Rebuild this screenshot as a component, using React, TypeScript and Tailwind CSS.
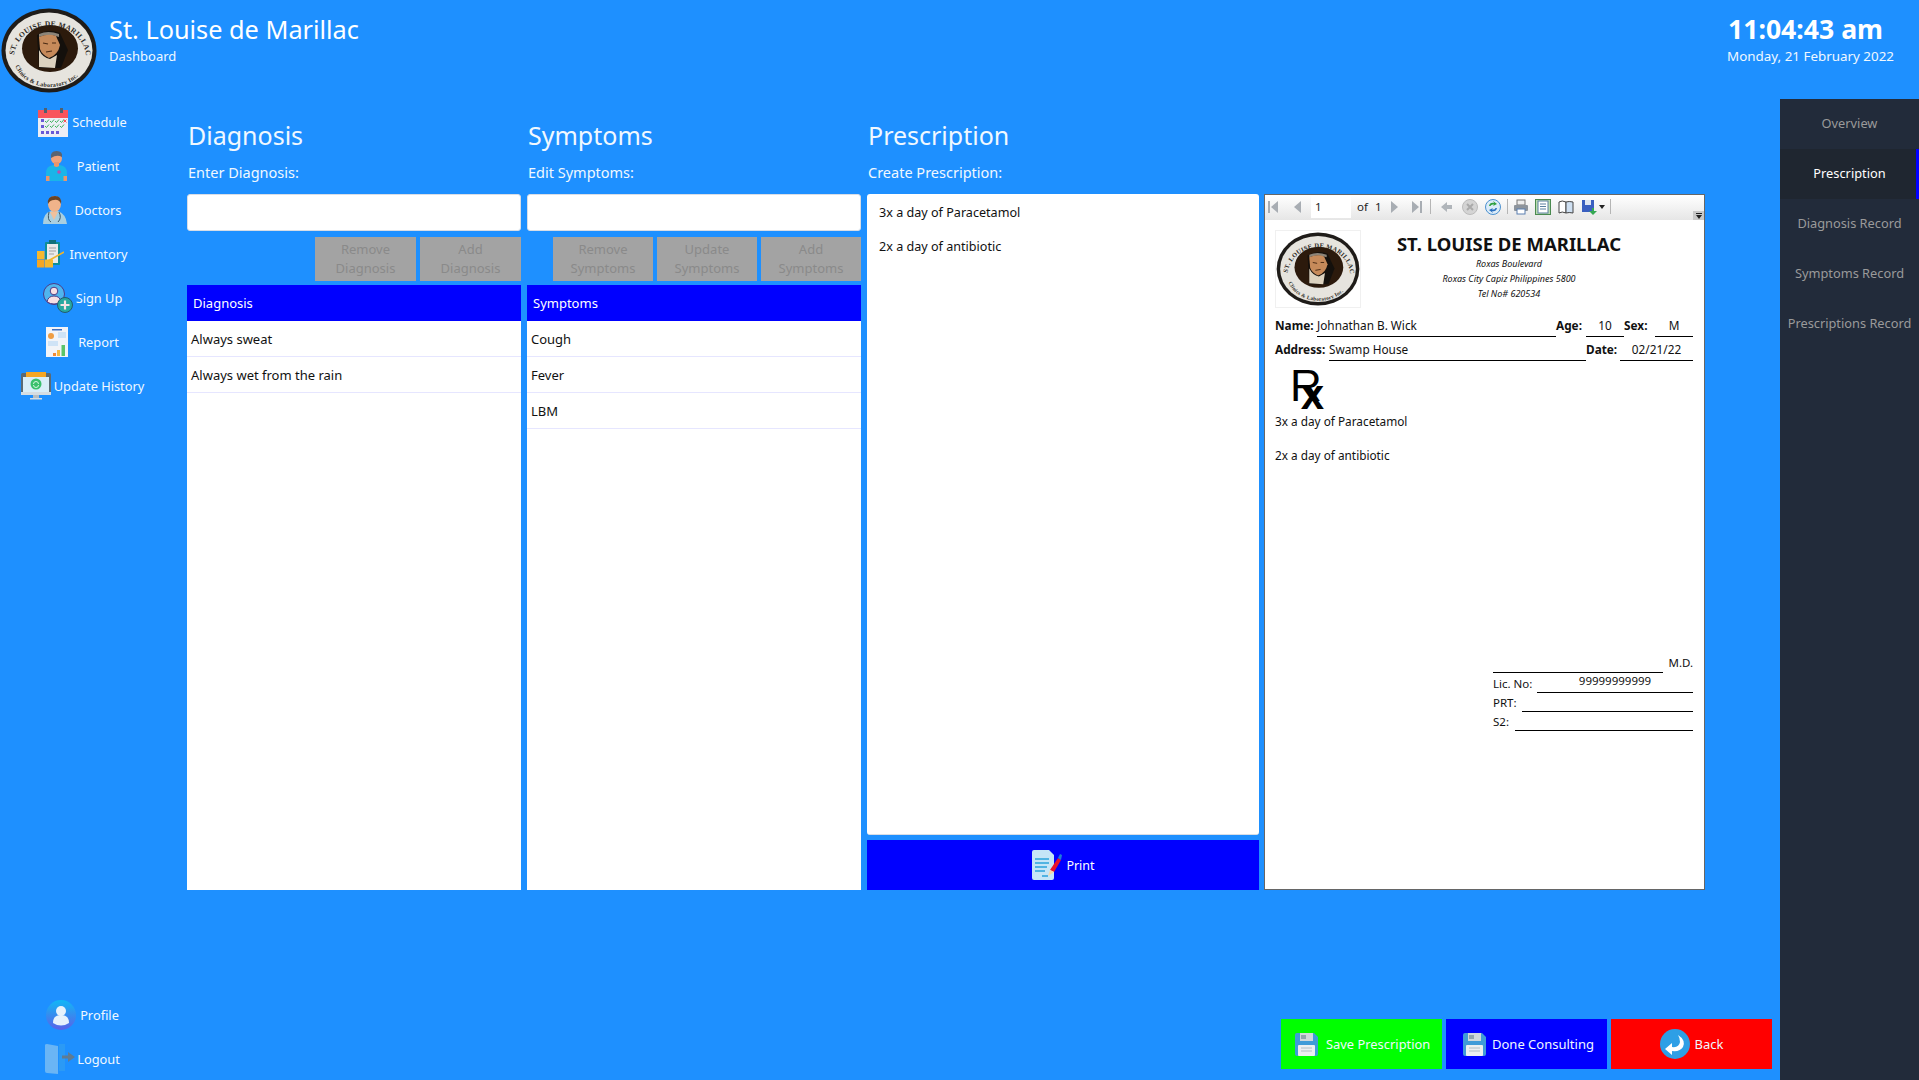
import React from "react";

const Logo = ({ id, className }: { id: string; className: string }) => (
  <svg viewBox="0 0 96 85" className={className}>
    <ellipse cx="48" cy="42.5" rx="47.5" ry="42" fill="#1f1c19" />
    <ellipse cx="48" cy="42.5" rx="43.5" ry="38" fill="#e6e4de" />
    <ellipse cx="49" cy="40.5" rx="28" ry="23.5" fill="#2c1a0c" />
    <defs>
      <path id={`${id}-t`} d="M13 50 A36 32 0 1 1 85 50" />
      <path id={`${id}-b`} d="M13 50 A36 29 0 0 0 85 50" />
    </defs>
    <text fontFamily="'Liberation Serif',serif" fontSize="7.4" fontWeight="700" fill="#2a2723" letterSpacing="0.3">
      <textPath href={`#${id}-t`} startOffset="3">ST. LOUISE DE MARILLAC</textPath>
    </text>
    <text fontFamily="'Liberation Serif',serif" fontSize="6" fontWeight="700" fill="#2a2723" letterSpacing="0.3">
      <textPath href={`#${id}-b`} startOffset="8">Clinics &amp; Laboratory Inc.</textPath>
    </text>
    <path d="M36 27 Q47 20 59 25 L67 42 L60 60 L38 60Z" fill="#14100c" />
    <path d="M38 26 Q47 22 58 26 L58 29 Q47 25 38 29Z" fill="#8c8478" />
    <path d="M38 29 Q47 25 55 28 L59 37 Q57 47 48 50 Q41 47 39 41Z" fill="#c68a5a" />
    <path d="M42 35 l5 1 M51 35 l4 0 M45 44 l6 -1" stroke="#4a2a14" strokeWidth="1.1" />
    <path d="M38 42 Q42 50 49 51 L56 47 L54 60 L38 59Z" fill="#dcd2bf" />
  </svg>
);

const Cal = () => (
  <svg viewBox="0 0 30 29" className="w-[30px] h-[29px]">
    <rect y="2" width="30" height="27" fill="#edeef5" />
    <rect y="2" width="30" height="8" fill="#f9545c" />
    <rect x="6" width="3" height="5" fill="#50606e" />
    <rect x="22" width="3" height="5" fill="#50606e" />
    {[13, 18].map((y) => [7, 12, 17, 22].map((x) => (
      <path key={`${x}${y}`} d={`M${x} ${y}l1.5 1.5l2.5-3`} stroke="#3eb35c" strokeWidth="1" fill="none" />
    )))}
    {[3, 8, 13, 18].map((x) => <rect key={x} x={x} y="23" width="3" height="3" fill="#6a5ad6" />)}
    <rect x="3" y="11" width="3" height="3" fill="#6a5ad6" />
    <rect x="3" y="17" width="3" height="3" fill="#6a5ad6" />
    <path d="M25.5 11.5l3 3M28.5 11.5l-3 3" stroke="#f9545c" />
  </svg>
);
const Patient = () => (
  <svg viewBox="0 0 21 30" className="w-[21px] h-[30px]">
    <path d="M0 30V22Q0 15 7 14L14 14Q21 15 21 22V30Z" fill="#19b5e8" />
    <rect x="0" y="25" width="3.5" height="5" fill="#e9966b" />
    <rect x="17.5" y="25" width="3.5" height="5" fill="#e9966b" />
    <circle cx="10.5" cy="7.5" r="5.5" fill="#f0a27a" />
    <path d="M8 11h5v4q-2.5 2-5 0Z" fill="#e9966b" />
    <path d="M5 7Q4 0 10.5 0Q17 0 16 6Q11 3 5 7Z" fill="#5a6472" />
    <circle cx="13" cy="21" r="1.8" fill="#b84fb0" />
  </svg>
);
const Doctor = () => (
  <svg viewBox="0 0 24 28" className="w-[24px] h-[28px]">
    <path d="M0 28Q0 17 8 15L15 15Q23 18 24 28Z" fill="#a9cfe0" />
    <path d="M7 16L11 24L15 16Z" fill="#f0c09c" />
    <ellipse cx="11.5" cy="8" rx="6.5" ry="8" fill="#f0b38a" />
    <path d="M5 8Q4 0 12 0Q19 0 18 8Q16 3 11 4Q7 4 5 8Z" fill="#6a4425" />
    <path d="M6 16Q4 24 8 26M16 16Q19 22 15 26" stroke="#3b5868" strokeWidth="1" fill="none" />
  </svg>
);
const Inventory = () => (
  <svg viewBox="0 0 27 28" className="w-[27px] h-[28px]">
    <rect x="8" y="2" width="15" height="23" rx="1" fill="#0f8f98" />
    <rect x="10" y="4" width="11" height="19" fill="#eaeaea" />
    <rect x="12" y="0" width="7" height="4" fill="#10707a" />
    <path d="M12 8h7M12 11h7M12 14h5" stroke="#a0a0a0" />
    <rect y="11" width="7.5" height="8" fill="#f5b82e" />
    <rect y="19.5" width="7.5" height="8" fill="#f5a623" />
    <rect x="8" y="19.5" width="8" height="8" fill="#f5b82e" />
    <path d="M11 21L27 12" stroke="#f0b429" strokeWidth="1.6" />
  </svg>
);
const SignUp = () => (
  <svg viewBox="0 0 30 30" className="w-[30px] h-[30px]">
    <circle cx="11" cy="11" r="10.5" fill="#4fb5ee" stroke="#4c3a86" />
    <circle cx="11" cy="8" r="3.8" fill="#f8dfe4" stroke="#4c3a86" />
    <path d="M4 19Q5 13 11 13Q17 13 18 19Q11 23 4 19Z" fill="#f8dfe4" stroke="#4c3a86" />
    <circle cx="22" cy="22" r="7.5" fill="#27a8a0" stroke="#245a6e" />
    <path d="M22 17.5v9M17.5 22h9" stroke="#f6e3e6" strokeWidth="2.2" />
  </svg>
);
const ReportIcon = () => (
  <svg viewBox="0 0 22 30" className="w-[22px] h-[30px]">
    <rect width="22" height="30" fill="#f2f4f8" />
    <rect x="6" y="2" width="10" height="1.5" fill="#3e6ec0" />
    <rect x="12" y="5" width="8" height="6" fill="#cfe3f6" />
    <circle cx="5" cy="9" r="3" fill="#ef9d43" />
    <rect x="2" y="14" width="10" height="5" fill="#cfe3f6" />
    <rect x="7" y="26" width="3" height="3" fill="#f08a35" />
    <rect x="11" y="23" width="3" height="6" fill="#f4b942" />
    <rect x="15.5" y="18" width="3.5" height="11" fill="#5cc46a" />
  </svg>
);
const UpdateIcon = () => (
  <svg viewBox="0 0 30 28" className="w-[30px] h-[28px]">
    <rect x="0" y="1" width="30" height="21" rx="1.5" fill="#5b6a73" />
    <rect x="5" y="0" width="20" height="5" fill="#f5a623" />
    <rect x="2" y="5" width="26" height="15" fill="#d9eef8" />
    <rect x="0" y="20" width="30" height="3" fill="#d5dde2" />
    <rect x="12" y="23" width="6" height="3" fill="#b5bec4" />
    <rect x="9" y="26" width="12" height="1.5" fill="#d5dde2" />
    <circle cx="15" cy="12" r="5.5" fill="#39c06c" />
    <path d="M12.5 12a2.5 2.5 0 0 1 5 0" stroke="#d5f6e0" fill="none" />
    <path d="M17.5 13a2.5 2.5 0 0 1 -5 0" stroke="#d5f6e0" fill="none" />
  </svg>
);
const ProfileIcon = () => (
  <svg viewBox="0 0 30 30" className="w-[30px] h-[30px]">
    <defs>
      <linearGradient id="pg" x1="0" y1="0" x2="0" y2="1">
        <stop offset="0" stopColor="#10b7f7" />
        <stop offset="1" stopColor="#5a62e8" />
      </linearGradient>
    </defs>
    <circle cx="15" cy="15" r="15" fill="url(#pg)" />
    <circle cx="15" cy="11" r="5" fill="#e6f2fc" />
    <path d="M7 23Q7 15 15 15Q23 15 23 23Q15 28 7 23Z" fill="#e6f2fc" />
  </svg>
);
const LogoutIcon = () => (
  <svg viewBox="0 0 30 30" className="w-[30px] h-[30px]">
    <rect x="14" y="0" width="6" height="27" fill="#2b9af5" />
    <path d="M0 1Q0 0 2 0L13 2V30L2 29Q0 29 0 27Z" fill="#6ab5f5" />
    <path d="M17 11.5H23V8L30 13L23 18V14.5H17Z" fill="#5f7b92" />
  </svg>
);
const SaveIcon = () => (
  <svg viewBox="0 0 23 23" className="w-[23px] h-[23px]">
    <path d="M0 2Q0 0 2 0H19L23 4V21Q23 23 21 23H2Q0 23 0 21Z" fill="#3f9bd8" />
    <rect x="5" y="0" width="13" height="8" fill="#cfd8dc" />
    <rect x="6" y="2" width="5" height="4" fill="#90a4ae" />
    <rect x="3" y="12" width="17" height="11" rx="1" fill="#eceff1" />
    <path d="M6 15h11M6 18h11" stroke="#b0bec5" />
  </svg>
);
const BackIcon = () => (
  <svg viewBox="0 0 30 30" className="w-[30px] h-[30px]">
    <circle cx="15" cy="15" r="15" fill="#2e9fe6" />
    <path d="M18 6Q26 11 23 18Q20 23 12 22V26L5 20L12 14V18Q19 19 20 13Q20 9 18 6Z" fill="#fff" />
  </svg>
);
const PrintIcon = () => (
  <svg viewBox="0 0 31 30" className="w-[31px] h-[30px]">
    <path d="M1 2Q1 0 3 0H18L23 5V28Q23 30 21 30H3Q1 30 1 28Z" fill="#c5e5f7" />
    <path d="M4 9h14M4 13h14M4 17h12M4 21h10M11 26h6" stroke="#2aa3dc" strokeWidth="1.6" />
    <path d="M19 20L27 8L30 10L23 22Z" fill="#e8132b" />
    <path d="M27 8L29 4L31 5L30 10Z" fill="#1e7bd8" />
    <path d="M19 20L23 22L17 26Z" fill="#f6d7a8" />
  </svg>
);

const navTop = [
  { label: "Schedule", icon: <Cal />, gap: "gap-[4px]" },
  { label: "Patient", icon: <Patient />, gap: "gap-[10px]" },
  { label: "Doctors", icon: <Doctor />, gap: "gap-[7px]" },
  { label: "Inventory", icon: <Inventory />, gap: "gap-[5px]" },
  { label: "Sign Up", icon: <SignUp />, gap: "gap-[3px]" },
  { label: "Report", icon: <ReportIcon />, gap: "gap-[10px]" },
  { label: "Update History", icon: <UpdateIcon />, gap: "gap-[3px]" },
];
const navBottom = [
  { label: "Profile", icon: <ProfileIcon />, gap: "gap-[4px]" },
  { label: "Logout", icon: <LogoutIcon />, gap: "gap-[2px]" },
];

const NavItem = ({ label, icon, gap }: { label: string; icon: React.ReactNode; gap: string }) => (
  <div className={`h-[44px] pr-[2px] flex items-center justify-center text-[12.8px] text-[#f0f8ff] ${gap}`}>
    {icon}
    <span className="pt-[1px]">{label}</span>
  </div>
);

const GrayBtn = ({ a, b, w }: { a: string; b: string; w: string }) => (
  <div className={`h-[44px] ${w} bg-[#a3a3a3] text-[#8a8a8a] text-[13px] leading-[19px] text-center flex flex-col justify-center`}>
    <span>{a}</span>
    <span>{b}</span>
  </div>
);

const Table = ({ head, rows, pl }: { head: string; rows: string[]; pl: string }) => (
  <div className="flex-1 bg-white mt-[4px] flex flex-col text-[13px]">
    <div className={`h-[36px] pt-[2px] bg-[#0000ff] text-white flex items-center ${pl}`}>{head}</div>
    {rows.map((r) => (
      <div key={r} className="h-[36px] pl-[4px] pt-[2px] flex items-center text-[#111] border-b border-[#e6e6ff]">{r}</div>
    ))}
  </div>
);

const ColHead = ({ title, label }: { title: string; label: string }) => (
  <>
    <div className="h-[38px] pl-[1px] text-[25px] leading-[38px] text-[#f0f8ff]">{title}</div>
    <div className="h-[40px] pl-[1px] pt-[8px] text-[14.5px] leading-[20px] text-[#f0f8ff]">{label}</div>
  </>
);

const InputBox = () => <div className="h-[37px] bg-white rounded-[3px] border border-[#d8dde6]" />;

const Tri = ({ left, bar, color = "#a8adb3" }: { left?: boolean; bar?: boolean; color?: string }) => (
  <svg viewBox="0 0 12 14" className="w-[12px] h-[14px]">
    {left ? <path d="M10 1V13L3 7Z" fill={color} /> : <path d="M2 1V13L9 7Z" fill={color} />}
    {bar && <rect x={left ? 0 : 10} y="1" width="2" height="12" fill={color} />}
  </svg>
);
const Sep = () => <div className="w-px h-[15px] bg-[#b5b5b5]" />;

const Toolbar = () => (
  <div className="h-[25px] pb-[2px] flex items-center pl-[3px] bg-gradient-to-b from-white to-[#e6e6e6] text-[11.5px] text-[#222] relative">
    <Tri left bar />
    <div className="w-[11px]" />
    <Tri left />
    <div className="w-[8px]" />
    <div className="w-[40px] h-[22px] bg-white pl-[4px] leading-[22px]">1</div>
    <span className="ml-[6px]">of</span>
    <span className="ml-[7px]">1</span>
    <div className="w-[7px]" />
    <Tri />
    <div className="w-[9px]" />
    <Tri bar />
    <div className="w-[8px]" />
    <Sep />
    <svg viewBox="0 0 14 14" className="w-[14px] h-[14px] ml-[9px]"><path d="M1 7L7 2V5H12V9H7V12Z" fill="#b0b5ba" /></svg>
    <svg viewBox="0 0 16 16" className="w-[16px] h-[16px] ml-[8px]"><circle cx="8" cy="8" r="7.5" fill="#d4d4d4" stroke="#bbb" /><path d="M5 5L11 11M11 5L5 11" stroke="#aaa" strokeWidth="2" /></svg>
    <svg viewBox="0 0 16 16" className="w-[16px] h-[16px] ml-[7px]"><circle cx="8" cy="8" r="7.5" fill="#dcecf8" stroke="#4a90d0" /><path d="M4 7Q5 3 9 4L8 2L12 5L8 7L9 5.5Q6 5 5.5 7Z" fill="#30a040" /><path d="M12 9Q11 13 7 12L8 14L4 11L8 9L7 10.5Q10 11 10.5 9Z" fill="#2a70c0" /></svg>
    <div className="w-[6px]" />
    <Sep />
    <svg viewBox="0 0 16 16" className="w-[16px] h-[16px] ml-[5px]"><rect x="4" y="1" width="8" height="5" fill="#eee" stroke="#777" /><rect x="1" y="6" width="14" height="6" rx="1" fill="#8d949c" /><rect x="4" y="10" width="8" height="5" fill="#fff" stroke="#5a7fb0" /></svg>
    <svg viewBox="0 0 16 16" className="w-[16px] h-[16px] ml-[6px]"><rect x="0.5" y="0.5" width="15" height="15" fill="#b9dcae" stroke="#4a8a50" /><rect x="3" y="2" width="10" height="12" fill="#fff" stroke="#5a7fa0" /><path d="M5 5h6M5 7.5h6M5 10h6" stroke="#5a7fa0" /></svg>
    <svg viewBox="0 0 16 16" className="w-[16px] h-[16px] ml-[7px]"><path d="M1 3Q4 1 8 3V14Q4 12 1 14Z" fill="#fff" stroke="#444" /><path d="M8 3Q11 2 15 3V14Q11 13 8 14Z" fill="#cfe0f2" stroke="#444" /></svg>
    <svg viewBox="0 0 16 16" className="w-[16px] h-[16px] ml-[7px]"><rect x="1" y="1" width="12" height="12" fill="#3a5fc0" /><rect x="4" y="1" width="6" height="5" fill="#dfe6f2" /><path d="M11 9V12H8L12 16L16 12H13V9Z" fill="#34a853" /></svg>
    <svg viewBox="0 0 6 4" className="w-[6px] h-[4px] ml-[2px]"><path d="M0 0H6L3 4Z" fill="#222" /></svg>
    <div className="w-[5px]" />
    <Sep />
    <div className="absolute right-0 bottom-0 w-[11px] h-[9px] bg-[#c8c8c8] flex items-center justify-center">
      <svg viewBox="0 0 6 6" className="w-[6px] h-[6px]"><path d="M0 0H6V1H0ZM0 2H6L3 6Z" fill="#222" /></svg>
    </div>
  </div>
);

const Report = () => (
  <div className="w-[441px] bg-white border border-[#666] flex flex-col font-['Noto_Sans',sans-serif] text-[#111]">
    <Toolbar />
    <div className="flex pl-[10px] pr-[11px] pt-[10px]">
      <div className="w-[86px] h-[78px] border border-[#f0f0f0] flex items-center justify-center">
        <Logo id="r" className="w-[84px] h-[74px]" />
      </div>
      <div className="flex-1 pr-[36px] text-center">
        <div className="text-[18.5px] font-bold leading-[24px] pt-[2px]">ST. LOUISE DE MARILLAC</div>
        <div className="text-[9px] italic leading-[15px]">Roxas Boulevard</div>
        <div className="text-[9px] italic leading-[15px]">Roxas City Capiz Philippines 5800</div>
        <div className="text-[9px] italic leading-[15px]">Tel No# 620534</div>
      </div>
    </div>
    <div className="px-[10px] text-[11.8px] mt-[5px]">
      <div className="flex h-[24px] items-end pr-[1px]">
        <b className="w-[42px] pb-[2px]">Name:</b>
        <span className="w-[239px] border-b border-black pb-[2px] h-[20px]">Johnathan B. Wick</span>
        <b className="w-[30px] pb-[2px]">Age:</b>
        <span className="w-[38px] border-b border-black text-center pb-[2px] h-[20px]">10</span>
        <b className="w-[31px] pb-[2px]">Sex:</b>
        <span className="w-[38px] border-b border-black text-center pb-[2px] h-[20px]">M</span>
      </div>
      <div className="flex h-[24px] items-end pr-[1px]">
        <b className="w-[54px] pb-[2px]">Address:</b>
        <span className="w-[257px] border-b border-black pb-[2px] h-[20px]">Swamp House</span>
        <b className="w-[34px] pb-[2px]">Date:</b>
        <span className="w-[73px] border-b border-black text-center pb-[2px] h-[20px]">02/21/22</span>
      </div>
      <div className="h-[49px] pl-[15px] flex font-['Liberation_Sans',sans-serif] text-black leading-none">
        <span className="text-[44px] mt-[3px] h-[44px] leading-[44px]">R</span>
        <span className="text-[42px] font-bold -ml-[21px] mt-[13px] h-[36px] leading-[42px]">x</span>
      </div>
      <div className="h-[34px] leading-[20px] mt-[1px]">3x a day of Paracetamol</div>
      <div className="leading-[20px]">2x a day of antibiotic</div>
    </div>
    <div className="mt-[191px] ml-[228px] mr-[11px] text-[11.5px] leading-[16px]">
      <div className="flex items-end h-[17px]">
        <div className="w-[170px] border-b border-black h-[10px]" />
        <span className="ml-auto pb-[2px]">M.D.</span>
      </div>
      <div className="flex h-[20px] items-end">
        <span className="w-[44px] pb-[1px]">Lic. No:</span>
        <span className="flex-1 border-b border-black text-center h-[20px]">99999999999</span>
      </div>
      <div className="flex h-[19px] items-end">
        <span className="w-[29px] pb-[1px]">PRT:</span>
        <span className="flex-1 border-b border-black h-[16px]" />
      </div>
      <div className="flex h-[19px] items-end">
        <span className="w-[22px] pb-[1px]">S2:</span>
        <span className="flex-1 border-b border-black h-[16px]" />
      </div>
    </div>
  </div>
);

export default function App() {
  return (
    <div className="w-[1919px] h-[1080px] bg-[#1e90ff] flex flex-col overflow-hidden font-['Noto_Sans',sans-serif]">
      <header className="h-[99px] flex text-white">
        <div className="pl-[1px] pt-[8px]">
          <Logo id="h" className="w-[96px] h-[85px]" />
        </div>
        <div className="ml-[12px] pt-[11px]">
          <div className="text-[25.3px] leading-[36px]">St. Louise de Marillac</div>
          <div className="text-[13px] leading-[18px] text-[#f0f8ff]">Dashboard</div>
        </div>
        <div className="ml-auto pr-[25px] pt-[11px] text-right">
          <div className="text-[26.6px] font-bold leading-[36px] pr-[11px]">11:04:43 am</div>
          <div className="text-[13.4px] leading-[18px] text-[#f0f8ff]">Monday, 21 February 2022</div>
        </div>
      </header>

      <div className="flex-1 flex min-h-0">
        <aside className="w-[187px] pr-[20px] pt-px flex flex-col justify-between">
          <div>{navTop.map((n) => <NavItem key={n.label} {...n} />)}</div>
          <div className="-mb-[1px]">{navBottom.map((n) => <NavItem key={n.label} {...n} />)}</div>
        </aside>

        <main className="flex-1 flex flex-col">
          <div className="h-[791px] flex gap-[6px] pt-[17px]">
            <section className="w-[334px] flex flex-col">
              <ColHead title="Diagnosis" label="Enter Diagnosis:" />
              <InputBox />
              <div className="flex justify-end gap-[4px] mt-[6px]">
                <GrayBtn a="Remove" b="Diagnosis" w="w-[101px]" />
                <GrayBtn a="Add" b="Diagnosis" w="w-[101px]" />
              </div>
              <Table head="Diagnosis" rows={["Always sweat", "Always wet from the rain"]} pl="pl-[6px]" />
            </section>
            <section className="w-[334px] flex flex-col">
              <ColHead title="Symptoms" label="Edit Symptoms:" />
              <InputBox />
              <div className="flex justify-end gap-[4px] mt-[6px]">
                <GrayBtn a="Remove" b="Symptoms" w="w-[100px]" />
                <GrayBtn a="Update" b="Symptoms" w="w-[100px]" />
                <GrayBtn a="Add" b="Symptoms" w="w-[100px]" />
              </div>
              <Table head="Symptoms" rows={["Cough", "Fever", "LBM"]} pl="pl-[6px]" />
            </section>
            <section className="w-[392px] flex flex-col">
              <ColHead title="Prescription" label="Create Prescription:" />
              <div className="flex-1 bg-white rounded-[3px] border-b border-[#d8dde6] pl-[12px] pt-[9px] text-[12.6px] text-[#111] leading-[20px]">
                <div className="h-[34px]">3x a day of Paracetamol</div>
                <div>2x a day of antibiotic</div>
              </div>
              <div className="h-[50px] mt-[5px] bg-[#0000ff] text-white text-[12.5px] flex items-center justify-center gap-[4px]">
                <PrintIcon />
                <span className="pt-[2px]">Print</span>
              </div>
            </section>
            <section className="flex flex-col -ml-[1px] pt-[78px]">
              <div className="flex-1 flex"><Report /></div>
            </section>
          </div>
          <div className="flex-1 flex justify-end items-start gap-[4px] pt-[129px] pr-[8px]">
            <div className="w-[161px] h-[50px] bg-[#00ff00] text-[#f0f8ff] text-[12.9px] flex items-center pl-[14px] gap-[8px]">
              <SaveIcon /><span className="pt-[2px]">Save Prescription</span>
            </div>
            <div className="w-[161px] h-[50px] bg-[#0000ff] text-[#f0f8ff] text-[13px] flex items-center pl-[17px] gap-[6px]">
              <SaveIcon /><span className="pt-[2px]">Done Consulting</span>
            </div>
            <div className="w-[161px] h-[50px] bg-[#ff0000] text-[#f0f8ff] text-[13px] flex items-center justify-center gap-[5px]">
              <BackIcon /><span className="pt-[2px]">Back</span>
            </div>
          </div>
        </main>

        <nav className="w-[139px] bg-[#222b3a] text-[12.8px] text-[#9a9a9a] flex flex-col">
          <div className="h-[50px] flex items-center justify-center">Overview</div>
          <div className="h-[50px] flex items-center justify-center bg-[#1f2630] text-white border-r-[3px] border-[#0000ff] pl-[3px]">Prescription</div>
          <div className="h-[50px] flex items-center justify-center">Diagnosis Record</div>
          <div className="h-[50px] flex items-center justify-center">Symptoms Record</div>
          <div className="h-[50px] flex items-center justify-center">Prescriptions Record</div>
        </nav>
      </div>
    </div>
  );
}
